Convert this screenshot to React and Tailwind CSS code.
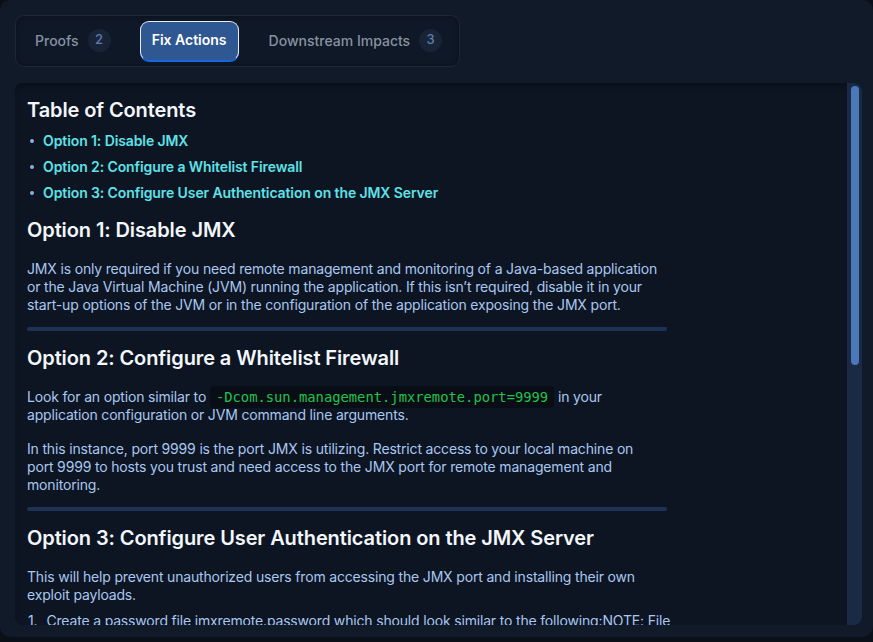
import React from "react";

const TOC = [
  "Option 1: Disable JMX",
  "Option 2: Configure a Whitelist Firewall",
  "Option 3: Configure User Authentication on the JMX Server",
];

function Badge({ n }) {
  return (
    <span className="ml-[9px] flex h-[23px] w-[23px] items-center justify-center rounded-full bg-[#182336] text-[13px] font-medium text-[#5c7cb2]">
      {n}
    </span>
  );
}

function Tabs() {
  return (
    <div className="flex h-[52px] w-[445px] items-center rounded-[9px] border border-[#1c2737] bg-[#0f1827] shadow-[inset_0_0_6px_rgba(0,0,0,0.35)]">
      <div className="ml-[19px] -mt-[2px] flex items-center text-[14px] font-medium text-[#8891a0]">
        Proofs
        <Badge n={2} />
      </div>
      <button className="ml-[29px] h-[40px] w-[99px] rounded-[9px] border-[1.5px] border-[#e6edf7] border-b-[#1668dc] bg-[#2f5791] pb-[3px] text-[14px] font-semibold text-white shadow-[0_1px_0_#1668dc]">
        Fix Actions
      </button>
      <div className="ml-[30px] -mt-[2px] flex items-center text-[14px] font-medium text-[#8891a0]">
        Downstream Impacts
        <Badge n={3} />
      </div>
    </div>
  );
}

function Sep({ className }) {
  return <div className={"h-[4px] w-[640px] rounded-full bg-[#1e3354] " + className} />;
}

function H2({ children, className }) {
  return (
    <h2 className={"text-[20px] font-semibold leading-[28px] tracking-[-0.1px] text-[#f3f6fa] " + className}>
      {children}
    </h2>
  );
}

function P({ children, className }) {
  return (
    <p className={"w-[660px] text-[14px] leading-[18px] tracking-[-0.17px] text-[#a9c7ef] " + className}>
      {children}
    </p>
  );
}

export default function App() {
  return (
    <div className="h-[642px] w-[873px] overflow-hidden bg-[#0a0f18] font-['Inter',sans-serif]">
      <div className="flex h-[637px] flex-col gap-[16px] rounded-[10px] bg-[#111a29] pb-[12px] pl-[15px] pr-[11px] pt-[15px]">
        <Tabs />
        <div className="flex min-h-0 flex-1 overflow-hidden rounded-[8px] bg-[#0d1523] shadow-[inset_0_6px_8px_-6px_rgba(0,0,0,0.6)]">
          <div className="flex-1 overflow-hidden pl-[12px] pt-[13px]">
            <H2>Table of Contents</H2>
            <ul className="mt-[7px] flex flex-col gap-[6px]">
              {TOC.map((t) => (
                <li key={t} className="flex items-center text-[14px] font-semibold leading-[20px] tracking-[-0.1px] text-[#5ee2e8]">
                  <span className="ml-[3px] mr-[9px] h-[4px] w-[4px] rounded-full bg-[#8eaedc]" />
                  {t}
                </li>
              ))}
            </ul>

            <H2 className="mt-[13px]">Option 1: Disable JMX</H2>
            <P className="mt-[16px]">
              JMX is only required if you need remote management and monitoring of a Java-based application
              <br />
              or the Java Virtual Machine (JVM) running the application. If this isn’t required, disable it in your
              <br />
              start-up options of the JVM or in the configuration of the application exposing the JMX port.
            </P>
            <Sep className="mt-[13px]" />

            <H2 className="mt-[13px]">Option 2: Configure a Whitelist Firewall</H2>
            <P className="mt-[16px]">
              Look for an option similar to{" "}
              <code className="rounded-[4px] bg-[#090e16] px-[6px] py-[3px] font-['DejaVu_Sans_Mono',monospace] text-[13.8px] tracking-normal text-[#21c24c]">
                -Dcom.sun.management.jmxremote.port=9999
              </code>{" "}
              in your
              <br />
              application configuration or JVM command line arguments.
            </P>
            <P className="mt-[16px]">
              In this instance, port 9999 is the port JMX is utilizing. Restrict access to your local machine on
              <br />
              port 9999 to hosts you trust and need access to the JMX port for remote management and
              <br />
              monitoring.
            </P>
            <Sep className="mt-[13px]" />

            <H2 className="mt-[13px]">Option 3: Configure User Authentication on the JMX Server</H2>
            <P className="mt-[16px]">
              This will help prevent unauthorized users from accessing the JMX port and installing their own
              <br />
              exploit payloads.
            </P>
            <P className="mt-[8px]">
              <span className="ml-[1px] mr-[9px]">1.</span>
              Create a password file jmxremote.password which should look similar to the following:NOTE: File
              <br />
              permissions must be restricted so only the owner can read and write.
            </P>
          </div>
          <div className="w-[15px] shrink-0 bg-[#1a2944] pl-[4px] pt-[3px]">
            <div className="h-[279px] w-[8px] rounded-full bg-[#4a78b9]" />
          </div>
        </div>
      </div>
    </div>
  );
}
